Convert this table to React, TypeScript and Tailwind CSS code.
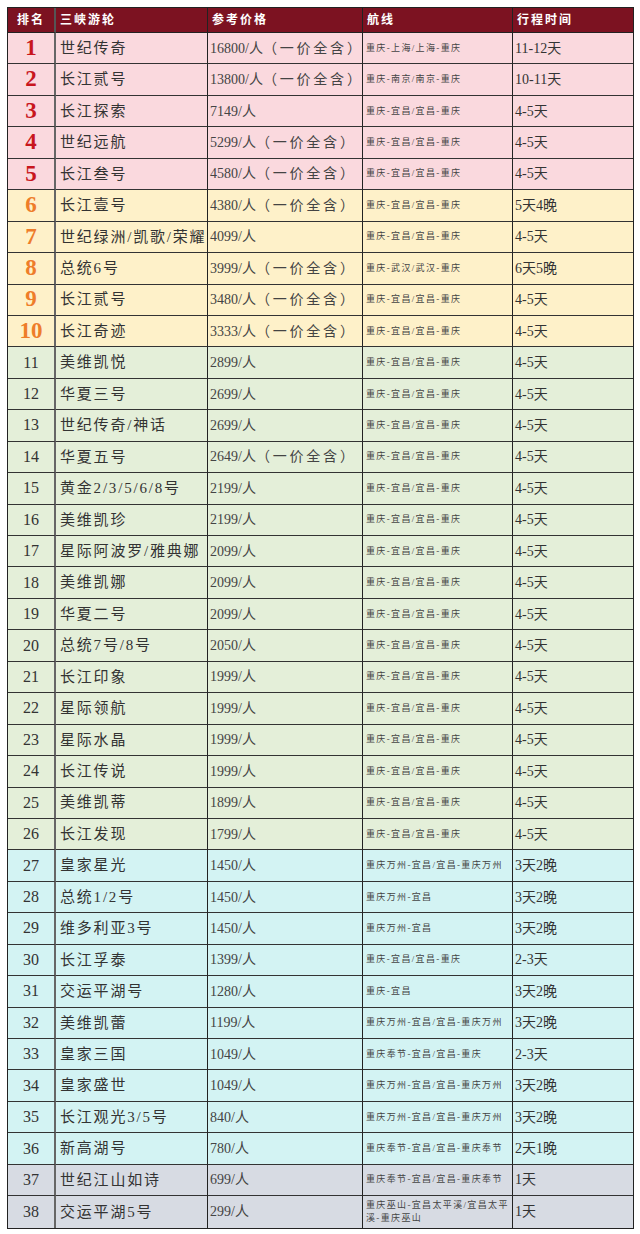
type Row = [string, string, string, string];

const rows: Row[] = [
  ["世纪传奇", "16800/人（一价全含）", "重庆-上海/上海-重庆", "11-12天"],
  ["长江贰号", "13800/人（一价全含）", "重庆-南京/南京-重庆", "10-11天"],
  ["长江探索", "7149/人", "重庆-宜昌/宜昌-重庆", "4-5天"],
  ["世纪远航", "5299/人（一价全含）", "重庆-宜昌/宜昌-重庆", "4-5天"],
  ["长江叁号", "4580/人（一价全含）", "重庆-宜昌/宜昌-重庆", "4-5天"],
  ["长江壹号", "4380/人（一价全含）", "重庆-宜昌/宜昌-重庆", "5天4晚"],
  ["世纪绿洲/凯歌/荣耀", "4099/人", "重庆-宜昌/宜昌-重庆", "4-5天"],
  ["总统6号", "3999/人（一价全含）", "重庆-武汉/武汉-重庆", "6天5晚"],
  ["长江贰号", "3480/人（一价全含）", "重庆-宜昌/宜昌-重庆", "4-5天"],
  ["长江奇迹", "3333/人（一价全含）", "重庆-宜昌/宜昌-重庆", "4-5天"],
  ["美维凯悦", "2899/人", "重庆-宜昌/宜昌-重庆", "4-5天"],
  ["华夏三号", "2699/人", "重庆-宜昌/宜昌-重庆", "4-5天"],
  ["世纪传奇/神话", "2699/人", "重庆-宜昌/宜昌-重庆", "4-5天"],
  ["华夏五号", "2649/人（一价全含）", "重庆-宜昌/宜昌-重庆", "4-5天"],
  ["黄金2/3/5/6/8号", "2199/人", "重庆-宜昌/宜昌-重庆", "4-5天"],
  ["美维凯珍", "2199/人", "重庆-宜昌/宜昌-重庆", "4-5天"],
  ["星际阿波罗/雅典娜", "2099/人", "重庆-宜昌/宜昌-重庆", "4-5天"],
  ["美维凯娜", "2099/人", "重庆-宜昌/宜昌-重庆", "4-5天"],
  ["华夏二号", "2099/人", "重庆-宜昌/宜昌-重庆", "4-5天"],
  ["总统7号/8号", "2050/人", "重庆-宜昌/宜昌-重庆", "4-5天"],
  ["长江印象", "1999/人", "重庆-宜昌/宜昌-重庆", "4-5天"],
  ["星际领航", "1999/人", "重庆-宜昌/宜昌-重庆", "4-5天"],
  ["星际水晶", "1999/人", "重庆-宜昌/宜昌-重庆", "4-5天"],
  ["长江传说", "1999/人", "重庆-宜昌/宜昌-重庆", "4-5天"],
  ["美维凯蒂", "1899/人", "重庆-宜昌/宜昌-重庆", "4-5天"],
  ["长江发现", "1799/人", "重庆-宜昌/宜昌-重庆", "4-5天"],
  ["皇家星光", "1450/人", "重庆万州-宜昌/宜昌-重庆万州", "3天2晚"],
  ["总统1/2号", "1450/人", "重庆万州-宜昌", "3天2晚"],
  ["维多利亚3号", "1450/人", "重庆万州-宜昌", "3天2晚"],
  ["长江孚泰", "1399/人", "重庆-宜昌/宜昌-重庆", "2-3天"],
  ["交运平湖号", "1280/人", "重庆-宜昌", "3天2晚"],
  ["美维凯蕾", "1199/人", "重庆万州-宜昌/宜昌-重庆万州", "3天2晚"],
  ["皇家三国", "1049/人", "重庆奉节-宜昌/宜昌-重庆", "2-3天"],
  ["皇家盛世", "1049/人", "重庆万州-宜昌/宜昌-重庆万州", "3天2晚"],
  ["长江观光3/5号", "840/人", "重庆万州-宜昌/宜昌-重庆万州", "3天2晚"],
  ["新高湖号", "780/人", "重庆奉节-宜昌/宜昌-重庆奉节", "2天1晚"],
  ["世纪江山如诗", "699/人", "重庆奉节-宜昌/宜昌-重庆奉节", "1天"],
  ["交运平湖5号", "299/人", "重庆巫山-宜昌太平溪/宜昌太平溪-重庆巫山", "1天"],
];

const bgFor = (rank: number) => {
  if (rank <= 5) return "bg-[#fad9de]";
  if (rank <= 10) return "bg-[#fef1c9]";
  if (rank <= 26) return "bg-[#e4efd9]";
  if (rank <= 36) return "bg-[#d3f3f3]";
  return "bg-[#d7dbe3]";
};

const rankClass = (rank: number) => {
  if (rank <= 5) return "text-[23px] font-bold text-[#c8161d]";
  if (rank <= 10) return "text-[23px] font-bold text-[#ee7d2a]";
  return "text-[16px] text-[#333]";
};

const font = "font-['Liberation_Serif','Noto_Sans_CJK_SC',serif]";

const splitPrice = (p: string) => {
  const i = p.indexOf("（");
  return i < 0 ? [p, ""] : [p.slice(0, i), p.slice(i)];
};

export default function App() {
  return (
    <div className={`w-[640px] h-[1234px] bg-white pt-[7px] pl-[7px] ${font}`}>
      <div className="w-[627px] border border-[#222] grid grid-cols-[48px_152px_155px_150px_120px] grid-rows-[25px] auto-rows-[31.45px]">
        {["排名", "三峡游轮", "参考价格", "航线", "行程时间"].map((h, i) => (
          <div
            key={h}
            className={`bg-[#7c1221] text-white text-[12px] font-bold tracking-[2px] flex items-center border-b border-[#222] ${
              i === 0 ? "justify-center border-r-2 border-r-[#555]" : "pl-[4px]"
            } ${i > 0 && i < 4 ? "border-r border-r-[#222]" : ""}`}
          >
            {h}
          </div>
        ))}
        {rows.map(([name, price, route, days], idx) => {
          const rank = idx + 1;
          const bg = bgFor(rank);
          const last = rank === rows.length;
          const bb = last ? "" : "border-b border-[#333]";
          const [num, note] = splitPrice(price);
          return [
            <div
              key={`r${rank}`}
              className={`${bg} ${bb} border-r-2 border-r-[#666] flex items-center justify-center ${rankClass(rank)}`}
            >
              {rank}
            </div>,
            <div
              key={`n${rank}`}
              className={`${bg} ${bb} border-r border-r-[#222] flex items-center pl-[4px] text-[15px] tracking-[1.8px] text-[#333] whitespace-nowrap overflow-hidden`}
            >
              {name}
            </div>,
            <div
              key={`p${rank}`}
              className={`${bg} ${bb} border-r border-r-[#222] flex items-center pl-[2px] text-[14px] text-[#444] whitespace-nowrap overflow-hidden`}
            >
              <span>{num}</span>
              {note && <span className="tracking-[2.8px] text-[14px]">{note}</span>}
            </div>,
            <div
              key={`l${rank}`}
              className={`${bg} ${bb} border-r border-r-[#222] flex items-center pl-[3px] pr-[2px] text-[9px] leading-[13px] tracking-[1.35px] text-[#444]`}
            >
              {route}
            </div>,
            <div
              key={`d${rank}`}
              className={`${bg} ${bb} flex items-center pl-[2px] text-[14px] text-[#333]`}
            >
              {days}
            </div>,
          ];
        })}
      </div>
    </div>
  );
}
